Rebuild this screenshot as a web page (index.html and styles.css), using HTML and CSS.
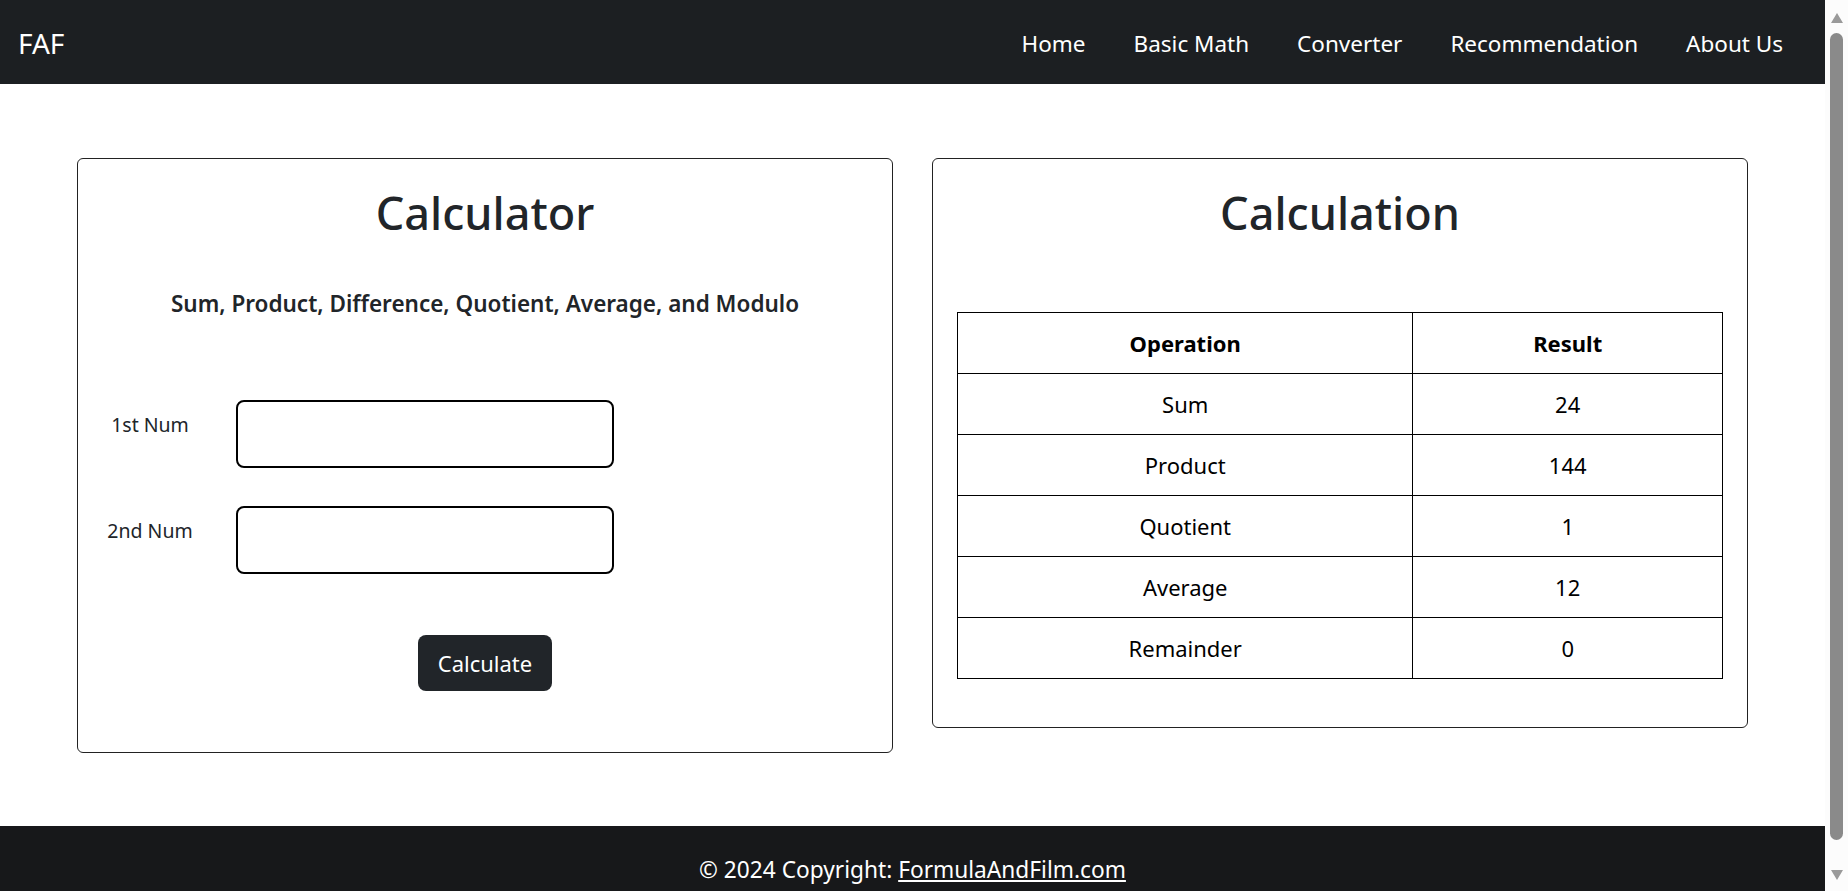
FILE: index.html
```html
<!DOCTYPE html>
<html lang="en">
<head>
<meta charset="utf-8">
<title>FAF - Basic Math</title>
<link rel="stylesheet" href="styles.css">
</head>
<body>
<div class="window">
  <div class="page">
    <nav class="navbar">
      <a class="brand" href="#">FAF</a>
      <ul class="nav-links">
        <li><a href="#">Home</a></li>
        <li><a href="#">Basic Math</a></li>
        <li><a href="#">Converter</a></li>
        <li><a href="#">Recommendation</a></li>
        <li><a href="#">About Us</a></li>
      </ul>
    </nav>
    <main class="main">
      <section class="card card-calc">
        <h1 class="card-title">Calculator</h1>
        <h5 class="subtitle">Sum, Product, Difference, Quotient, Average, and Modulo</h5>
        <form class="calc-form">
          <div class="form-row">
            <label class="form-label" for="n1">1st Num</label>
            <input class="form-input" id="n1" type="text">
          </div>
          <div class="form-row form-row-2">
            <label class="form-label" for="n2">2nd Num</label>
            <input class="form-input" id="n2" type="text">
          </div>
          <div class="btn-row">
            <button type="button" class="btn-dark">Calculate</button>
          </div>
        </form>
      </section>
      <section class="card card-result">
        <h1 class="card-title">Calculation</h1>
        <table class="result-table">
          <thead>
            <tr><th class="col-op">Operation</th><th class="col-res">Result</th></tr>
          </thead>
          <tbody>
            <tr><td>Sum</td><td>24</td></tr>
            <tr><td>Product</td><td>144</td></tr>
            <tr><td>Quotient</td><td>1</td></tr>
            <tr><td>Average</td><td>12</td></tr>
            <tr><td>Remainder</td><td>0</td></tr>
          </tbody>
        </table>
      </section>
    </main>
    <footer class="footer">
      <span>© 2024 Copyright: <a href="#">FormulaAndFilm.com</a></span>
    </footer>
  </div>
  <div class="scrollbar">
    <div class="sb-arrow sb-up"></div>
    <div class="sb-thumb"></div>
    <div class="sb-arrow sb-down"></div>
  </div>
</div>
</body>
</html>
```
FILE: styles.css
```css
* { box-sizing: border-box; }
html, body { margin: 0; padding: 0; height: 100%; overflow: hidden; }
body {
  font-family: "Noto Sans", "Open Sans", sans-serif;
  color: #212529;
  background: #fff;
}
.window { display: flex; height: 891px; }
.page { flex: 1; display: flex; flex-direction: column; overflow: hidden; }

/* navbar */
.navbar {
  height: 84px;
  flex: none;
  background: #1c1f22;
  display: flex;
  align-items: center;
  justify-content: space-between;
  padding: 2px 18px 0 18px;
}
.brand {
  color: #fff;
  text-decoration: none;
  font-size: 28px;
  line-height: 1;
}
.nav-links {
  list-style: none;
  display: flex;
  margin: 0;
  padding: 0;
  gap: 0;
}
.nav-links a {
  display: block;
  color: #fff;
  text-decoration: none;
  font-size: 22.5px;
  padding: 8px 24px;
}

/* main */
.main {
  height: 742px;
  flex: none;
  display: flex;
  align-items: flex-start;
  gap: 39px;
  padding: 74px 76px 0 77px;
}
.card {
  width: 816px;
  flex: none;
  border: 1px solid #222;
  border-radius: 6px;
  display: flex;
  flex-direction: column;
  align-items: center;
}
.card-calc { padding: 27px 0 0 0; height: 595px; }
.card-result { padding: 27px 24px 48px 24px; }
.card-title {
  margin: 0;
  font-size: 45px;
  font-weight: 500;
  line-height: 54px;
  color: #212529;
}
.subtitle {
  margin: 47px 0 0 0;
  font-size: 22.5px;
  font-weight: 600;
  line-height: 33px;
  color: #212529;
}
.calc-form {
  align-self: stretch;
  display: flex;
  flex-direction: column;
  margin-top: 80px;
}
.form-row {
  display: flex;
  align-items: flex-start;
  padding-left: 13px;
}
.form-row-2 { margin-top: 38px; }
.form-label {
  width: 118px;
  text-align: center;
  font-size: 19.5px;
  line-height: 28px;
  padding-top: 11px;
  color: #212529;
}
.form-input {
  margin-left: 27px;
  width: 378px;
  height: 68px;
  border: 2px solid #000;
  border-radius: 8px;
  background: #fff;
  font-family: inherit;
  font-size: 22px;
  padding: 0 12px;
}
.btn-row {
  display: flex;
  justify-content: center;
  margin-top: 61px;
}
.btn-dark {
  width: 134px;
  height: 56px;
  background: #212529;
  color: #fff;
  border: none;
  border-radius: 8px;
  font-family: inherit;
  font-size: 22px;
  padding: 0;
}

/* table */
.result-table {
  margin-top: 72px;
  width: 766px;
  border-collapse: collapse;
  color: #000;
  font-size: 22px;
}
.result-table th,
.result-table td {
  border: 1px solid #000;
  height: 61px;
  text-align: center;
  vertical-align: middle;
  padding: 0;
}
.result-table th { font-weight: 700; }
.col-op { width: 456px; }
.col-res { width: 310px; }

/* footer */
.footer {
  flex: 1;
  background: #17181a;
  color: #fff;
  text-align: center;
  font-size: 22.7px;
  line-height: 33px;
  padding-top: 27px;
}
.footer a { color: #fff; text-decoration: underline; }

/* fake browser scrollbar */
.scrollbar {
  width: 23px;
  flex: none;
  background: #fcfcfc;
  display: flex;
  flex-direction: column;
  align-items: center;
  padding: 13px 0 11px 0;
}
.sb-arrow {
  width: 0;
  height: 0;
  border-left: 6px solid transparent;
  border-right: 6px solid transparent;
}
.sb-up { border-bottom: 10px solid #9a9a9a; }
.sb-down { border-top: 10px solid #9a9a9a; }
.sb-thumb {
  width: 13px;
  margin: 10px 0 30px 0;
  flex: 1;
  background: #8a8a8a;
  border-radius: 7px;
}
```
